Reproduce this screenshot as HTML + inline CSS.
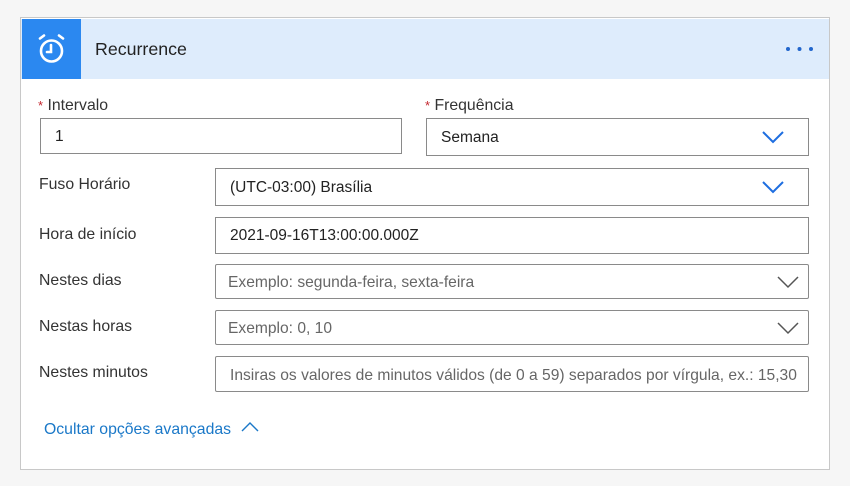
<!DOCTYPE html>
<html><head><meta charset="utf-8"><style>
body{margin:0;width:850px;height:486px;background:#f6f6f6;font-family:"Liberation Sans",sans-serif;position:relative;overflow:hidden}
.card{position:absolute;left:20px;top:17px;width:808px;height:451px;background:#fff;border:1px solid #c8c8c8}
.hdr{position:absolute;left:0;top:1px;width:808px;height:60px;background:#deecfc}
.ico{position:absolute;left:1px;top:0;width:59px;height:60px;background:#2b88f0}
.t{position:absolute;font-size:15.8px;color:#333;white-space:nowrap}
.in{position:absolute;box-sizing:border-box;border:1px solid #8a8a8a;background:#fff;font-size:15.5px;color:#222;padding-left:14px;white-space:nowrap;overflow:hidden;display:flex;align-items:center;padding-top:1px}
.in.r{border-radius:2px}
.ph{color:#666;font-size:15.6px;padding-top:3px}
.star{color:#c4262e;font-size:13px}
svg.ch{position:absolute}
</style></head><body>
<div class="card">
 <div class="hdr">
  <div class="ico"><svg width="59" height="60" viewBox="0 0 59 60"><g fill="none" stroke="#fff" stroke-width="2.6" stroke-linecap="round"><circle cx="29.5" cy="32" r="10.5"/><path d="M29 26v7h-4"/><path d="M18 19.5l4-3M41 19.5l-4-3"/></g></svg></div>
  <div class="t" style="left:74px;top:20px;font-size:17.8px;color:#222">Recurrence</div>
  <svg style="position:absolute;left:763px;top:26px" width="34" height="8"><circle cx="4" cy="4" r="2" fill="#2266cc"/><circle cx="15.5" cy="4" r="2" fill="#2266cc"/><circle cx="27" cy="4" r="2" fill="#2266cc"/></svg>
 </div>
</div>
<div class="t" style="left:38px;top:97px"><span class="star">*</span> Intervalo</div>
<div class="t" style="left:425px;top:97px"><span class="star">*</span> Frequência</div>
<div class="in" style="left:40px;top:118px;width:362px;height:36px">1</div>
<div class="in" style="left:426px;top:118px;width:383px;height:38px">Semana</div>
<svg class="ch" style="left:761px;top:130px" width="24" height="14"><path d="M2 2l10 10 10-10" fill="none" stroke="#1e6ee0" stroke-width="2"/></svg>
<div class="t" style="left:39px;top:176px">Fuso Horário</div>
<div class="in" style="left:215px;top:168px;width:594px;height:38px">(UTC-03:00) Brasília</div>
<svg class="ch" style="left:761px;top:180px" width="24" height="14"><path d="M2 2l10 10 10-10" fill="none" stroke="#1e6ee0" stroke-width="2"/></svg>
<div class="t" style="left:39px;top:226px">Hora de início</div>
<div class="in" style="left:215px;top:217px;width:594px;height:37px">2021-09-16T13:00:00.000Z</div>
<div class="t" style="left:39px;top:272px">Nestes dias</div>
<div class="in r ph" style="left:215px;top:264px;width:594px;height:35px;padding-left:12px">Exemplo: segunda-feira, sexta-feira</div>
<svg class="ch" style="left:776px;top:275px" width="24" height="14"><path d="M2 2l10 10 10-10" fill="none" stroke="#555" stroke-width="1.5"/></svg>
<div class="t" style="left:39px;top:318px">Nestas horas</div>
<div class="in r ph" style="left:215px;top:310px;width:594px;height:35px;padding-left:12px">Exemplo: 0, 10</div>
<svg class="ch" style="left:776px;top:321px" width="24" height="14"><path d="M2 2l10 10 10-10" fill="none" stroke="#555" stroke-width="1.5"/></svg>
<div class="t" style="left:39px;top:364px">Nestes minutos</div>
<div class="in r ph" style="left:215px;top:356px;width:594px;height:36px">Insiras os valores de minutos válidos (de 0 a 59) separados por vírgula, ex.: 15,30</div>
<div class="t" style="left:44px;top:421px;color:#1a78c8">Ocultar opções avançadas</div>
<svg class="ch" style="left:240px;top:421px" width="20" height="12"><path d="M2 10l8-8 8 8" fill="none" stroke="#1a78c8" stroke-width="1.4"/></svg>
</body></html>
